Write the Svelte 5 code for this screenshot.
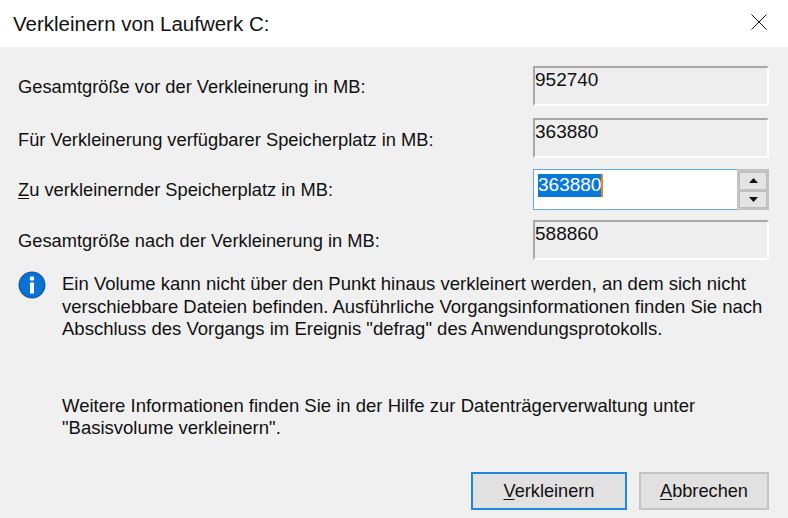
<script>
  const info1 = ['Ein Volume kann nicht über den Punkt hinaus verkleinert werden, an dem sich nicht', 'verschiebbare Dateien befinden. Ausführliche Vorgangsinformationen finden Sie nach', 'Abschluss des Vorgangs im Ereignis "defrag" des Anwendungsprotokolls.'];
  const info2 = ['Weitere Informationen finden Sie in der Hilfe zur Datenträgerverwaltung unter', '"Basisvolume verkleinern".'];
</script>

<div class="dialog">
  <header class="title">
    <span>Verkleinern von Laufwerk C:</span>
    <svg class="close" width="16" height="16" viewBox="0 0 16 16"><path d="M0.5 0.5L15.5 15.5M15.5 0.5L0.5 15.5" stroke="#111" stroke-width="1" fill="none"/></svg>
  </header>
  <main class="body">
    <div class="row first">
      <span class="label">Gesamtgröße vor der Verkleinerung in MB:</span>
      <div class="field">952740</div>
    </div>
    <div class="row second">
      <span class="label">Für Verkleinerung verfügbarer Speicherplatz in MB:</span>
      <div class="field">363880</div>
    </div>
    <div class="row third">
      <span class="label"><u>Z</u>u verkleinernder Speicherplatz in MB:</span>
      <div class="spin">
        <div class="input"><span class="sel">363880</span></div>
        <div class="arrows">
          <div class="arrow"><svg width="9" height="5" viewBox="0 0 9 5"><path d="M4.5 0L9 5H0Z" fill="#111"/></svg></div>
          <div class="arrow"><svg width="9" height="5" viewBox="0 0 9 5"><path d="M0 0H9L4.5 5Z" fill="#111"/></svg></div>
        </div>
      </div>
    </div>
    <div class="row fourth">
      <span class="label">Gesamtgröße nach der Verkleinerung in MB:</span>
      <div class="field">588860</div>
    </div>
    <div class="info">
      <svg class="icon" width="28" height="28" viewBox="0 0 28 28">
        <circle cx="14" cy="14" r="13.5" fill="#0f5fb0"/>
        <circle cx="14" cy="14" r="12" fill="#0a72d0"/>
        <circle cx="14" cy="7.5" r="2.3" fill="#fff"/>
        <rect x="12" y="11.5" width="4" height="11" fill="#fff"/>
      </svg>
      <div class="texts">
        <p class="para">{#each info1 as l}<span class="ln">{l}</span>{/each}</p>
        <p class="para more">{#each info2 as l}<span class="ln">{l}</span>{/each}</p>
      </div>
    </div>
    <div class="buttons">
      <button class="btn primary"><u>V</u>erkleinern</button>
      <button class="btn secondary"><u>A</u>bbrechen</button>
    </div>
  </main>
</div>

<style>
  :global(body) { margin: 0; background: #f0f0f0; }
  .dialog { width: 788px; height: 518px; overflow: hidden; background: #f0f0f0; color: #111; font-family: "Liberation Sans", Arial, sans-serif; font-size: 18.3px; }
  .title { height: 47px; background: #fff; display: flex; align-items: center; justify-content: space-between; padding: 0 21px 0 13px; font-size: 20.5px; }
  .close { margin-top: -3px; }
  .body { padding: 19px 19px 0 18px; }
  .row { display: flex; align-items: center; justify-content: space-between; height: 40px; }
  .label { padding-top: 2px; }
  .second { margin-top: 12px; }
  .second .label { padding-top: 3px; }
  .third { margin-top: 11px; height: 41px; }
  .third .label { padding-top: 0; }
  .fourth { margin-top: 10px; }
  .label u, .btn u { text-underline-offset: 2px; }
  .field { width: 236px; height: 40px; box-sizing: border-box; border-top: 2px solid #a8a8a8; border-left: 2px solid #a8a8a8; border-right: 2px solid #fff; border-bottom: 2px solid #fff; padding: 1px 0 0 0; line-height: 22px; font-size: 19px; background: #eeeeee; }
  .spin { width: 236px; height: 41px; display: flex; box-sizing: border-box; }
  .input { flex: 1; border: 1px solid #64a8e4; border-right: none; background: #fff; padding: 4px 0 0 4px; font-size: 19px; line-height: 22px; }
  .sel { display: inline-block; background: #0a78d7; color: #fff; height: 23px; border-right: 2px solid #f08020; }
  .arrows { width: 32px; background: #c4c4c4; display: flex; flex-direction: column; gap: 1px; padding: 3px 2px 2px; box-sizing: border-box; }
  .arrow { flex: 1; background: #e4e4e4; border: 1px solid #bdbdbd; display: flex; align-items: center; justify-content: center; }
  .info { display: flex; gap: 16px; margin-top: 11px; }
  .icon { flex: none; }
  .texts { line-height: 22.5px; padding-top: 2px; font-size: 18.5px; }
  .para { margin: 0; }
  .more { margin-top: 54px; }
  .ln { display: block; white-space: nowrap; }
  .buttons { display: flex; justify-content: flex-end; gap: 12px; margin-top: 32px; }
  .btn { height: 38px; font: inherit; font-size: 18.2px; color: #111; background: #e1e1e1; box-sizing: border-box; padding: 2px 0 0; }
  .primary { width: 156px; border: 2px solid #1e87e0; }
  .secondary { width: 130px; border: 2px solid #c4c4c4; }
</style>
